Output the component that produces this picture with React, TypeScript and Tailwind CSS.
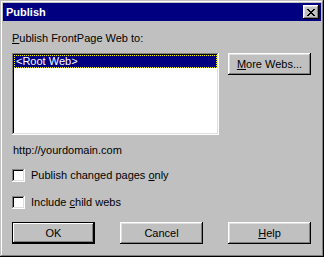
import { ReactNode } from 'react';

const raised =
  'shadow-[inset_-1px_-1px_#000,inset_1px_1px_#fff,inset_-2px_-2px_#808080,inset_2px_2px_#dfdfdf]';
const sunken =
  'shadow-[inset_-1px_-1px_#fff,inset_1px_1px_#808080,inset_-2px_-2px_#dfdfdf,inset_2px_2px_#000]';

const Button = ({ children, isDefault }: { children: ReactNode; isDefault?: boolean }) => (
  <button
    className={`w-[83px] h-[22px] bg-[#c0c0c0] text-black flex items-center justify-center ${
      isDefault
        ? 'shadow-[inset_0_0_0_1px_#000,inset_-2px_-2px_#000,inset_2px_2px_#fff,inset_-3px_-3px_#808080]'
        : raised
    }`}
  >
    {children}
  </button>
);

const Checkbox = ({ children }: { children: ReactNode }) => (
  <label className="flex items-center gap-[6px] h-[13px] leading-[13px]">
    <span className={`w-[13px] h-[13px] bg-white ${sunken}`} />
    <span>{children}</span>
  </label>
);

const CloseIcon = () => (
  <svg width="8" height="7" viewBox="0 0 8 7" shapeRendering="crispEdges">
    <path
      fill="#000"
      d="M0 0h2v1H0zM6 0h2v1H6zM1 1h2v1H1zM5 1h2v1H5zM2 2h4v1H2zM3 3h2v1H3zM2 4h4v1H2zM1 5h2v1H1zM5 5h2v1H5zM0 6h2v1H0zM6 6h2v1H6z"
    />
  </svg>
);

export default function App() {
  return (
    <div
      className="w-[324px] h-[257px] bg-[#c0c0c0] p-[3px] flex flex-col text-[11px] text-black shadow-[inset_-1px_-1px_#000,inset_1px_1px_#c0c0c0,inset_-2px_-2px_#808080,inset_2px_2px_#fff]"
      style={{ fontFamily: '"Liberation Sans", Arial, sans-serif' }}
    >
      <div className="h-[18px] bg-[#000080] flex items-center justify-between pl-[3px] pr-[2px]">
        <span className="text-white font-bold text-[11px]">Publish</span>
        <span className={`w-[16px] h-[14px] bg-[#c0c0c0] flex items-center justify-center ${raised}`}>
          <CloseIcon />
        </span>
      </div>

      <div className="flex flex-col px-[9px]">
        <div className="mt-[11px] leading-[13px]">
          <span className="underline">P</span>ublish FrontPage Web to:
        </div>

        <div className="mt-[8px] flex gap-[9px] items-start">
          <div className={`w-[207px] h-[82px] bg-white p-[2px] ${sunken}`}>
            <div className="h-[13px] bg-[#000080] text-white leading-[12px] pl-[2px] outline-1 outline-dotted outline-[#ffff00] -outline-offset-1">
              &lt;Root Web&gt;
            </div>
          </div>
          <Button>
            <span className="underline">M</span>ore Webs...
          </Button>
        </div>

        <div className="mt-[9px] leading-[13px] pl-[1px]">http://yourdomain.com</div>

        <div className="mt-[12px]">
          <Checkbox>
            Publish changed pages <span className="underline">o</span>nly
          </Checkbox>
        </div>
        <div className="mt-[14px]">
          <Checkbox>
            Include <span className="underline">c</span>hild webs
          </Checkbox>
        </div>

        <div className="mt-[13px] flex gap-[25px]">
          <Button isDefault>OK</Button>
          <Button>Cancel</Button>
          <Button>
            <span className="underline">H</span>elp
          </Button>
        </div>
      </div>
    </div>
  );
}
